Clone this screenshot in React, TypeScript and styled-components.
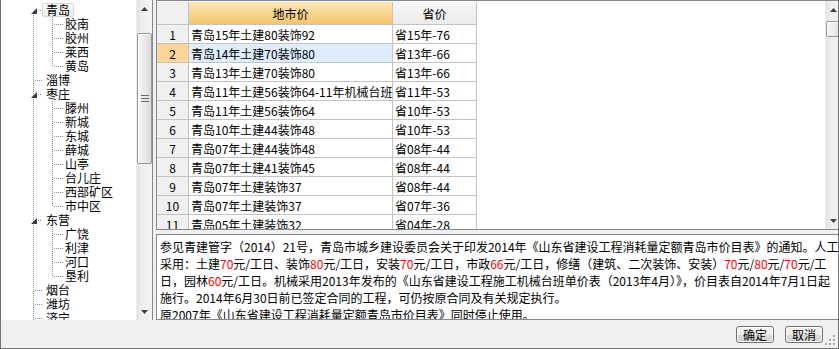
import React from "react";
import styled, { createGlobalStyle } from "styled-components";

const GlobalStyle = createGlobalStyle`
  html, body {
    margin: 0;
    padding: 0;
    background: #f0f0f0;
  }
  body {
    font-family: "Noto Sans CJK SC", "Liberation Sans", sans-serif;
    font-size: 12px;
    color: #000;
  }
  * {
    box-sizing: border-box;
  }
`;

const Window = styled.div`
  width: 839px;
  height: 349px;
  background: #f0f0f0;
  border: 1px solid #6f6f6f;
  border-top: none;
  display: flex;
  flex-direction: column;
  overflow: hidden;
`;

const Main = styled.div`
  display: flex;
  height: 320px;
  flex: none;
`;

/* ---------- left tree ---------- */

const LeftPanel = styled.div`
  width: 152px;
  flex: none;
  display: flex;
  background: #fff;
  border-right: 1px solid #828790;
`;

const TreeBody = styled.div`
  flex: 1;
  padding-top: 3px;
  overflow: hidden;
`;

const TreeRow = styled.div`
  display: flex;
  height: 14px;
  align-items: stretch;
  white-space: nowrap;
`;

const Label = styled.span<{ $selected?: boolean }>`
  height: 14px;
  line-height: 12px;
  padding: 0 3px;
  border: 1px solid ${(p) => (p.$selected ? "#d5d5d5" : "transparent")};
  border-radius: 2px;
  background: ${(p) =>
    p.$selected ? "linear-gradient(to bottom, #fbfbfb, #ececec)" : "none"};
`;

const ChildLabel = styled(Label)`
  padding-left: 1px;
`;

const DOT = "#8a8a8a";

type RootGuideProps = { first?: boolean; expander?: boolean; stub?: boolean };

const RootGuide = ({ first, expander, stub = true }: RootGuideProps) => (
  <svg width={41} height={14} style={{ flex: "none", display: "block" }}>
    <line
      x1={32.5}
      x2={32.5}
      y1={first ? 12 : 0}
      y2={14}
      stroke={DOT}
      strokeDasharray="1 1"
    />
    {stub && (
      <line
        x1={expander ? 37 : 34}
        x2={41}
        y1={7.5}
        y2={7.5}
        stroke={DOT}
        strokeDasharray="1 1"
      />
    )}
    {expander && <polygon points="36,5 36,11 30,11" fill="#3a3a3a" />}
  </svg>
);

const ChildGuide = ({ last }: { last?: boolean }) => (
  <svg width={21} height={14} style={{ flex: "none", display: "block" }}>
    <line
      x1={10.5}
      x2={10.5}
      y1={0}
      y2={last ? 8 : 14}
      stroke={DOT}
      strokeDasharray="1 1"
    />
    <line x1={12} x2={21} y1={7.5} y2={7.5} stroke={DOT} strokeDasharray="1 1" />
  </svg>
);

/* ---------- scrollbars ---------- */

const ScrollTrack = styled.div<{ $w: number }>`
  width: ${(p) => p.$w}px;
  flex: none;
  display: flex;
  flex-direction: column;
  background: linear-gradient(to right, #e3e3e3, #efefef 35%, #f3f3f3);
  border-left: 1px solid #ebebeb;
`;

const ScrollButton = styled.div`
  height: 17px;
  flex: none;
  display: flex;
  align-items: center;
  justify-content: center;
`;

const ScrollSpace = styled.div`
  flex: 1;
`;

const ScrollThumb = styled.div<{ $top: number; $h: number }>`
  margin-top: ${(p) => p.$top}px;
  height: ${(p) => p.$h}px;
  flex: none;
  border: 1px solid #989898;
  border-radius: 2px;
  background: linear-gradient(to right, #f6f6f6, #ececec 45%, #dadada);
  box-shadow: inset 1px 1px 0 #fff;
  display: flex;
  align-items: center;
  justify-content: center;
`;

const Arrow = ({ down }: { down?: boolean }) => (
  <svg width={7} height={4}>
    <polygon points={down ? "0,0 7,0 3.5,4" : "3.5,0 7,4 0,4"} fill="#404040" />
  </svg>
);

const Grip = () => (
  <svg width={8} height={7}>
    <rect x={0} y={0} width={8} height={1} fill="#6a6a6a" />
    <rect x={0} y={3} width={8} height={1} fill="#6a6a6a" />
    <rect x={0} y={6} width={8} height={1} fill="#6a6a6a" />
  </svg>
);

type ScrollProps = { width: number; top: number; size: number; grip?: boolean };

const ScrollBar = ({ width, top, size, grip }: ScrollProps) => (
  <ScrollTrack $w={width}>
    <ScrollButton>
      <Arrow />
    </ScrollButton>
    <ScrollThumb $top={top} $h={size}>
      {grip && <Grip />}
    </ScrollThumb>
    <ScrollSpace />
    <ScrollButton>
      <Arrow down />
    </ScrollButton>
  </ScrollTrack>
);

/* ---------- right side ---------- */

const RightPanel = styled.div`
  flex: 1;
  margin-left: 3px;
  display: flex;
  flex-direction: column;
`;

const GridPanel = styled.div`
  height: 230px;
  flex: none;
  display: flex;
  background: #fff;
  border: 1px solid #828790;
`;

const GridBody = styled.div`
  flex: 1;
  padding-top: 1px;
  overflow: hidden;
`;

const GridRow = styled.div<{ $header?: boolean }>`
  display: flex;
  height: ${(p) => (p.$header ? 23 : 19)}px;
`;

const Cell = styled.div<{ $w: number; $bg?: string; $center?: boolean }>`
  width: ${(p) => p.$w}px;
  flex: none;
  display: flex;
  align-items: center;
  justify-content: ${(p) => (p.$center ? "center" : "flex-start")};
  padding-left: ${(p) => (p.$center ? 0 : 2)}px;
  background: ${(p) => p.$bg || "#fff"};
  border-right: 1px solid #c3c3c3;
  border-bottom: 1px solid #c3c3c3;
  white-space: nowrap;
  overflow: hidden;
`;

const TextBox = styled.div`
  height: 86px;
  margin-top: 4px;
  flex: none;
  background: #fff;
  border: 1px solid #828790;
  padding: 3px 3px;
  line-height: 17px;
  overflow: hidden;
`;

const TextLine = styled.div`
  white-space: nowrap;
`;

const Red = styled.span`
  color: #ff0000;
`;

/* ---------- bottom bar ---------- */

const BottomBar = styled.div`
  height: 28px;
  flex: none;
  display: flex;
  justify-content: flex-end;
  align-items: flex-start;
  padding: 6px 2px 0 0;
`;

const ButtonGroup = styled.div`
  display: flex;
  gap: 11px;
`;

const Button = styled.button`
  width: 38px;
  height: 17px;
  padding: 0;
  font-family: inherit;
  font-size: 12px;
  line-height: 14px;
  color: #000;
  border: 1px solid #707070;
  border-radius: 3px;
  background: linear-gradient(to bottom, #f3f3f3 0%, #ebebeb 50%, #dddddd 51%, #cfcfcf 100%);
  box-shadow: inset 0 0 0 1px #fcfcfc;
`;

const ResizeGrip = styled.svg`
  align-self: flex-end;
  margin: 0 0 2px 2px;
  flex: none;
`;

const HEADER_ORANGE = "linear-gradient(to bottom, #fce6b6 0%, #f9d896 45%, #f5c56c 100%)";
const HEADER_GRAY = "linear-gradient(to bottom, #f7f7f7, #ebebeb)";

const tree = [
  { label: "青岛", selected: true, children: ["胶南", "胶州", "莱西", "黄岛"] },
  { label: "淄博" },
  {
    label: "枣庄",
    children: ["滕州", "新城", "东城", "薛城", "山亭", "台儿庄", "西部矿区", "市中区"],
  },
  { label: "东营", children: ["广饶", "利津", "河口", "垦利"] },
  { label: "烟台" },
  { label: "潍坊" },
  { label: "济宁" },
];

const rows = [
  ["青岛15年土建80装饰92", "省15年-76"],
  ["青岛14年土建70装饰80", "省13年-66"],
  ["青岛13年土建70装饰80", "省13年-66"],
  ["青岛11年土建56装饰64-11年机械台班", "省11年-53"],
  ["青岛11年土建56装饰64", "省10年-53"],
  ["青岛10年土建44装饰48", "省10年-53"],
  ["青岛07年土建44装饰48", "省08年-44"],
  ["青岛07年土建41装饰45", "省08年-44"],
  ["青岛07年土建装饰37", "省08年-44"],
  ["青岛07年土建装饰37", "省07年-36"],
  ["青岛05年土建装饰32", "省04年-28"],
];

const SELECTED_ROW = 1;

export default function App() {
  return (
    <>
      <GlobalStyle />
      <Window>
        <Main>
          <LeftPanel>
            <TreeBody>
              {tree.map((node, i) => (
                <React.Fragment key={node.label}>
                  <TreeRow>
                    <RootGuide first={i === 0} expander={!!node.children} />
                    <Label $selected={node.selected}>{node.label}</Label>
                  </TreeRow>
                  {node.children?.map((child, j) => (
                    <TreeRow key={child}>
                      <RootGuide stub={false} />
                      <ChildGuide last={j === node.children!.length - 1} />
                      <ChildLabel>{child}</ChildLabel>
                    </TreeRow>
                  ))}
                </React.Fragment>
              ))}
            </TreeBody>
            <ScrollBar width={16} top={16} size={131} grip />
          </LeftPanel>

          <RightPanel>
            <GridPanel>
              <GridBody>
                <GridRow $header>
                  <Cell $w={32} $bg="#f0f0f0" $center />
                  <Cell $w={204} $bg={HEADER_ORANGE} $center>
                    地市价
                  </Cell>
                  <Cell $w={84} $bg={HEADER_GRAY} $center>
                    省价
                  </Cell>
                </GridRow>
                {rows.map(([city, prov], i) => (
                  <GridRow key={i}>
                    <Cell $w={32} $bg={i === SELECTED_ROW ? "#fbd597" : "#f0f0f0"} $center>
                      {i + 1}
                    </Cell>
                    <Cell $w={204} $bg={i === SELECTED_ROW ? "#ddedfc" : "#fff"}>
                      {city}
                    </Cell>
                    <Cell $w={84}>{prov}</Cell>
                  </GridRow>
                ))}
              </GridBody>
              <ScrollBar width={17} top={3} size={16} />
            </GridPanel>

            <TextBox>
              <TextLine>
                参见青建管字（2014）21号，青岛市城乡建设委员会关于印发2014年《山东省建设工程消耗量定额青岛市价目表》的通知。人工
              </TextLine>
              <TextLine>
                采用：土建<Red>70</Red>元/工日、装饰<Red>80</Red>元/工日，安装<Red>70</Red>
                元/工日，市政<Red>66</Red>元/工日，修缮（建筑、二次装饰、安装）<Red>70</Red>元/
                <Red>80</Red>元/<Red>70</Red>元/工
              </TextLine>
              <TextLine>
                日，园林<Red>60</Red>
                元/工日。机械采用2013年发布的《山东省建设工程施工机械台班单价表（2013年4月）》，价目表自2014年7月1日起
              </TextLine>
              <TextLine>施行。2014年6月30日前已签定合同的工程，可仍按原合同及有关规定执行。</TextLine>
              <TextLine>原2007年《山东省建设工程消耗量定额青岛市价目表》同时停止使用。</TextLine>
            </TextBox>
          </RightPanel>
        </Main>

        <BottomBar>
          <ButtonGroup>
            <Button>确定</Button>
            <Button>取消</Button>
          </ButtonGroup>
          <ResizeGrip width={11} height={11}>
            {[
              [8, 0],
              [8, 4],
              [4, 4],
              [8, 8],
              [4, 8],
              [0, 8],
            ].map(([x, y]) => (
              <g key={`${x}-${y}`}>
                <rect x={x + 1} y={y + 1} width={2} height={2} fill="#ffffff" />
                <rect x={x} y={y} width={2} height={2} fill="#a3a3a3" />
              </g>
            ))}
          </ResizeGrip>
        </BottomBar>
      </Window>
    </>
  );
}
